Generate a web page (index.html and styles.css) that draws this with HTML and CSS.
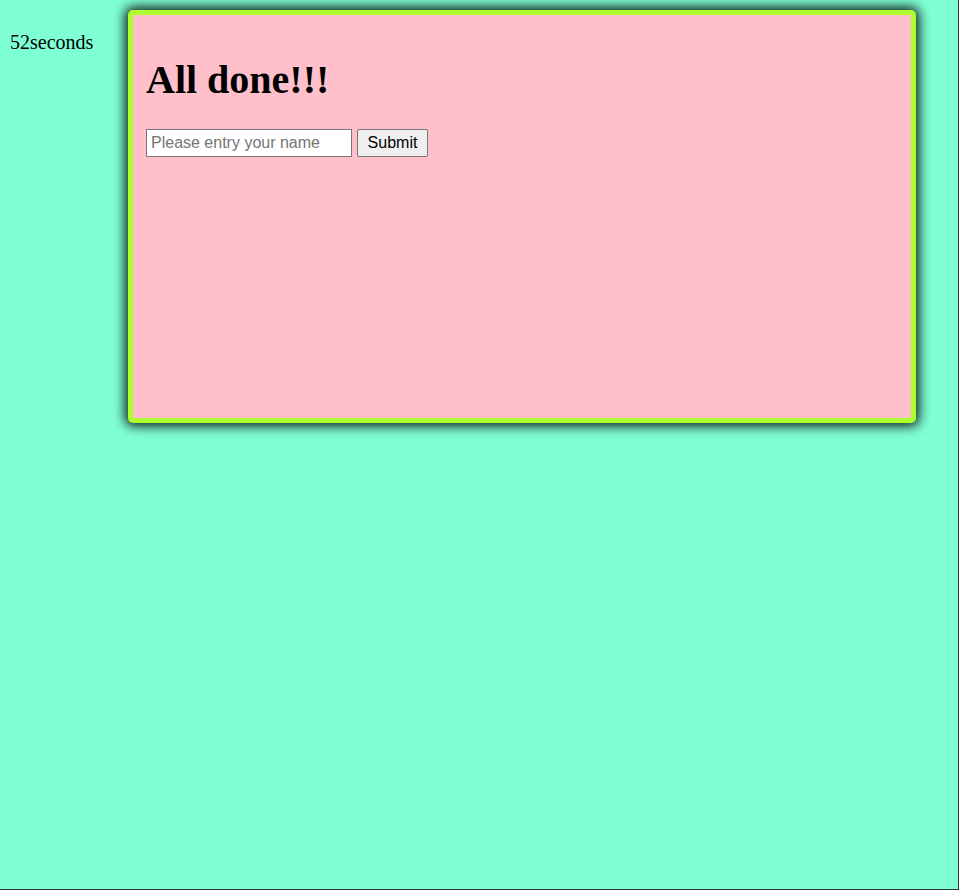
FILE: index.html
```
<!DOCTYPE html>
<html>
<head>
<meta charset="utf-8">
<link rel="stylesheet" href="styles.css">
</head>
<body>
<div class="page">
  <div class="timer">52seconds</div>
  <div class="card">
    <h1 class="title">All done!!!</h1>
    <form class="form">
      <input class="name" type="text" placeholder="Please entry your name">
      <button class="submit" type="button">Submit</button>
    </form>
  </div>
</div>
</body>
</html>
```
FILE: styles.css
```
html {
  height: 100%;
  box-sizing: border-box;
  background: #7fffd4;
  border-right: 1px solid #333;
  border-bottom: 1px solid #333;
}
body {
  margin: 0;
  height: 100%;
  font-family: "Liberation Serif", serif;
}
.page {
  display: flex;
  align-items: flex-start;
  padding: 10px 0 0 10px;
}
.timer {
  font-size: 20px;
  width: 118px;
  margin-top: 21px;
}
.card {
  box-sizing: border-box;
  width: 788px;
  height: 413px;
  background: pink;
  border: 5px solid #adff2f;
  border-radius: 5px;
  box-shadow: 0 0 12px 3px rgba(0, 0, 0, 0.9);
  padding: 15px 13px 13px;
}
.title {
  font-size: 40px;
  margin: 26px 0 26px;
}
.form {
  display: flex;
  gap: 5px;
}
.name, .submit {
  font-family: "Liberation Sans", Arial, sans-serif;
  font-size: 16px;
  box-sizing: border-box;
  height: 28px;
  margin: 0;
}
.name {
  width: 206px;
  border: 1px solid #767676;
  padding: 1px 4px;
  background: #fff;
}
.name::placeholder {
  color: #757575;
}
.submit {
  width: 71px;
  border: 1px solid #767676;
  border-radius: 2px;
  background: #efefef;
  color: #000;
  padding: 1px 6px;
}
```
